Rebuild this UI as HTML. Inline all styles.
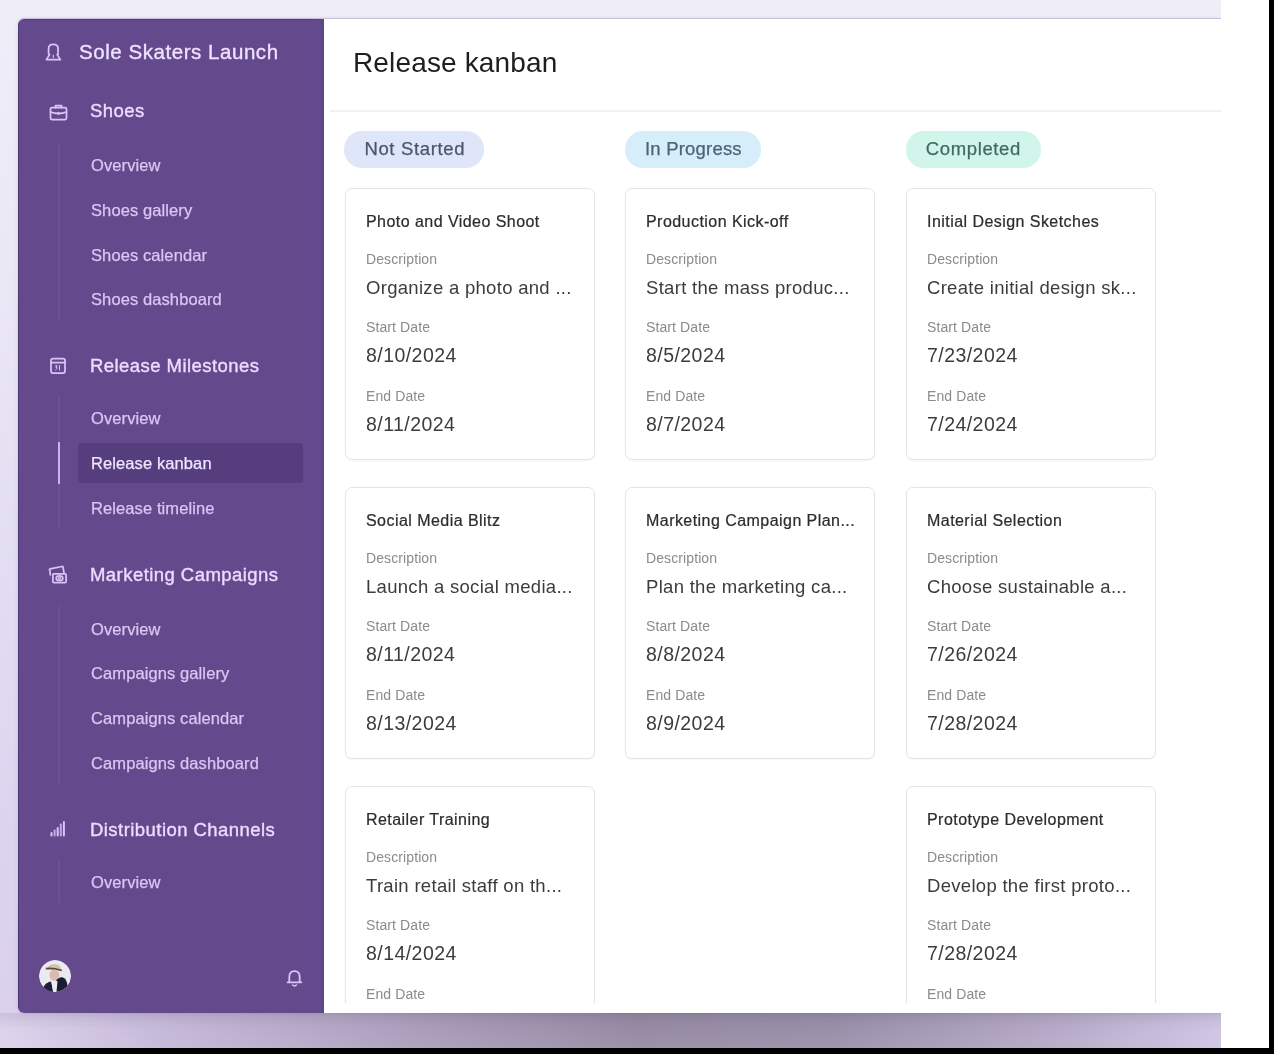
<!DOCTYPE html>
<html><head><meta charset="utf-8"><style>
html,body{margin:0;padding:0;}
body{width:1274px;height:1054px;overflow:hidden;position:relative;background:#fff;font-family:"Liberation Sans",sans-serif;}
.t{position:absolute;white-space:nowrap;}
#bg{position:absolute;left:0;top:0;width:1221px;height:1048px;background:linear-gradient(180deg,#f0eef9 0%,#ebe8f6 25%,#e2ddf2 55%,#dcd4ef 80%,#dad0ec 100%);}
#shadow{position:absolute;left:0;top:1013px;width:1221px;height:35px;
 background:linear-gradient(180deg,rgba(50,40,70,0.10) 0%,rgba(50,40,70,0) 45%,rgba(255,255,255,0.06) 100%),linear-gradient(90deg,#ddd3ec 0%,#c6b9d9 13%,#ad9fbd 33%,#978ba4 52%,#9a8fa9 68%,#b5a9c7 86%,#d0c5e3 100%);}
#whiteR{position:absolute;left:1221px;top:0;width:48px;height:1048px;background:#fff;}
#blackR{position:absolute;left:1269px;top:0;width:5px;height:1054px;background:#000;}
#blackB{position:absolute;left:0;top:1048px;width:1274px;height:6px;background:#000;}
#win{will-change:transform;box-shadow:0 -0.5px 1px rgba(70,50,110,0.22),0 0 5px rgba(70,50,110,0.10);position:absolute;left:18px;top:19px;width:1203px;height:994px;overflow:hidden;border-radius:6px 0 0 6px;background:#fff;}
#side{position:absolute;left:0;top:0;width:306px;height:994px;background:#644a8d;box-shadow:inset 1px 0 0 rgba(50,35,85,0.45),inset 0 1px 0 rgba(50,35,85,0.3);}
#sideedge{position:absolute;left:294px;top:0;width:12px;height:994px;background:linear-gradient(90deg,rgba(92,76,145,0) 0%,rgba(92,76,145,0.35) 70%,#5a4a8a 78%,#574787 100%);}
#main{position:absolute;left:306px;top:0;width:897px;height:994px;background:#fff;}
.gl{position:absolute;left:40px;width:1.5px;background:rgba(255,255,255,0.05);}
.gla{position:absolute;left:40px;width:1.5px;height:42px;background:#c9b5ea;}
.act{position:absolute;left:60px;width:225px;height:40px;border-radius:4px;background:#563d7e;}
.av{position:absolute;width:32px;height:32px;border-radius:50%;overflow:hidden;}
.pill{position:absolute;box-sizing:border-box;height:36.5px;line-height:36.5px;padding:0 0 0 20px;border-radius:18px;font-size:18.5px;white-space:nowrap;-webkit-text-stroke:0.25px currentColor;}
.clip{position:absolute;left:0;top:0;width:897px;height:984px;overflow:hidden;}
.card{position:absolute;width:250px;height:272px;box-sizing:border-box;border:1px solid #e4e4e8;border-radius:7px;background:#fff;box-shadow:0 1px 2px rgba(0,0,0,0.04);}
</style></head><body>
<div id="bg"></div>
<div id="shadow"></div>
<div id="win">
<div id="side"><div class="t" style="left:61px;top:23.00px;font-size:20.5px;line-height:20.5px;color:#efe2ff;letter-spacing:0.55px;font-weight:400;-webkit-text-stroke:0.35px currentColor;">Sole Skaters Launch</div><div class="t" style="left:72px;top:83.00px;font-size:18.5px;line-height:18.5px;color:#ecdcff;letter-spacing:0.45px;font-weight:400;-webkit-text-stroke:0.35px currentColor;">Shoes</div><div class="t" style="left:72px;top:338.00px;font-size:18.5px;line-height:18.5px;color:#ecdcff;letter-spacing:0.45px;font-weight:400;-webkit-text-stroke:0.35px currentColor;">Release Milestones</div><div class="t" style="left:72px;top:547.00px;font-size:18.5px;line-height:18.5px;color:#ecdcff;letter-spacing:0.45px;font-weight:400;-webkit-text-stroke:0.35px currentColor;">Marketing Campaigns</div><div class="t" style="left:72px;top:802.00px;font-size:18.5px;line-height:18.5px;color:#ecdcff;letter-spacing:0.45px;font-weight:400;-webkit-text-stroke:0.35px currentColor;">Distribution Channels</div><div class="gl" style="top:124.0px;height:177.6px"></div><div class="t" style="left:73px;top:138.00px;font-size:16.5px;line-height:16.5px;color:#dac7f3;letter-spacing:0.1px;font-weight:400;-webkit-text-stroke:0.25px currentColor;">Overview</div><div class="t" style="left:73px;top:183.00px;font-size:16.5px;line-height:16.5px;color:#dac7f3;letter-spacing:0.1px;font-weight:400;-webkit-text-stroke:0.25px currentColor;">Shoes gallery</div><div class="t" style="left:73px;top:228.00px;font-size:16.5px;line-height:16.5px;color:#dac7f3;letter-spacing:0.1px;font-weight:400;-webkit-text-stroke:0.25px currentColor;">Shoes calendar</div><div class="t" style="left:73px;top:272.00px;font-size:16.5px;line-height:16.5px;color:#dac7f3;letter-spacing:0.1px;font-weight:400;-webkit-text-stroke:0.25px currentColor;">Shoes dashboard</div><div class="gl" style="top:377.1px;height:133.0px"></div><div class="t" style="left:73px;top:391.00px;font-size:16.5px;line-height:16.5px;color:#dac7f3;letter-spacing:0.1px;font-weight:400;-webkit-text-stroke:0.25px currentColor;">Overview</div><div class="act" style="top:423.5px"></div><div class="gla" style="top:422.5px"></div><div class="t" style="left:73px;top:436.00px;font-size:16.5px;line-height:16.5px;color:#f0e6ff;letter-spacing:0.1px;font-weight:400;-webkit-text-stroke:0.25px currentColor;">Release kanban</div><div class="t" style="left:73px;top:481.00px;font-size:16.5px;line-height:16.5px;color:#dac7f3;letter-spacing:0.1px;font-weight:400;-webkit-text-stroke:0.25px currentColor;">Release timeline</div><div class="gl" style="top:587.4px;height:177.6px"></div><div class="t" style="left:73px;top:602.00px;font-size:16.5px;line-height:16.5px;color:#dac7f3;letter-spacing:0.1px;font-weight:400;-webkit-text-stroke:0.25px currentColor;">Overview</div><div class="t" style="left:73px;top:646.00px;font-size:16.5px;line-height:16.5px;color:#dac7f3;letter-spacing:0.1px;font-weight:400;-webkit-text-stroke:0.25px currentColor;">Campaigns gallery</div><div class="t" style="left:73px;top:691.00px;font-size:16.5px;line-height:16.5px;color:#dac7f3;letter-spacing:0.1px;font-weight:400;-webkit-text-stroke:0.25px currentColor;">Campaigns calendar</div><div class="t" style="left:73px;top:736.00px;font-size:16.5px;line-height:16.5px;color:#dac7f3;letter-spacing:0.1px;font-weight:400;-webkit-text-stroke:0.25px currentColor;">Campaigns dashboard</div><div class="gl" style="top:840.5px;height:43.8px"></div><div class="t" style="left:73px;top:855.00px;font-size:16.5px;line-height:16.5px;color:#dac7f3;letter-spacing:0.1px;font-weight:400;-webkit-text-stroke:0.25px currentColor;">Overview</div><svg style="position:absolute;left:26px;top:24px" width="18" height="20" viewBox="0 0 18 20" fill="none" stroke="#d8c4f7" stroke-width="1.75" stroke-linecap="round" stroke-linejoin="round"><path d="M4.6 11.2 V5.2 Q4.6 1.4 9.3 1.4 Q14 1.4 14 5.2 V11.2"/><path d="M5.6 11.6 L2.4 16.6 H16.4 L13.2 11.6"/><path d="M9.3 12 V14.5" stroke-width="1.1"/></svg><svg style="position:absolute;left:31px;top:84px" width="19" height="18" viewBox="0 0 19 18" fill="none" stroke="#d8c4f7" stroke-width="1.75" stroke-linecap="round" stroke-linejoin="round"><rect x="1.5" y="4.5" width="16" height="12" rx="1.5"/><path d="M6.5 4.5 V2.5 H12.5 V4.5"/><path d="M1.5 9 Q9.5 12 17.5 9"/><path d="M9.5 9.5 V11"/></svg><svg style="position:absolute;left:31px;top:337px" width="18" height="19" viewBox="0 0 18 19" fill="none" stroke="#d8c4f7" stroke-width="1.75" stroke-linecap="round" stroke-linejoin="round"><rect x="2" y="2.5" width="14" height="14.5" rx="2"/><path d="M2 6.5 H16"/><path d="M6.5 10 L8 9.5 L7 11.5 L8.5 12 L6.5 14" stroke-width="1"/><path d="M10.5 9.5 V14" stroke-width="1"/></svg><svg style="position:absolute;left:30px;top:545px" width="20" height="20" viewBox="0 0 20 20" fill="none" stroke="#d8c4f7" stroke-width="1.75" stroke-linecap="round" stroke-linejoin="round"><path d="M2.4 10.8 L1.6 5.6 Q1.5 4.9 2.2 4.8 L14 2.5 Q14.8 2.4 15 3.1 L16 8.8"/><rect x="4.9" y="9.9" width="13.2" height="8.6" rx="1"/><ellipse cx="11.5" cy="14.2" rx="3.3" ry="2.3"/><circle cx="11.5" cy="14.2" r="0.6"/></svg><svg style="position:absolute;left:32px;top:801px" width="16" height="17" viewBox="0 0 16 17" fill="#d8c4f7"><rect x="0.5" y="12" width="2" height="4.6" rx="1"/><rect x="3.6" y="9.6" width="2" height="7" rx="1" opacity="0.8"/><rect x="6.7" y="7" width="2" height="9.6" rx="1"/><rect x="9.8" y="3.6" width="2" height="13" rx="1" opacity="0.8"/><rect x="12.9" y="1" width="2" height="15.6" rx="1"/></svg><svg style="position:absolute;left:267px;top:949px" width="19" height="20" viewBox="0 0 19 20" fill="none" stroke="#d8c4f7" stroke-width="1.75" stroke-linecap="round" stroke-linejoin="round"><path d="M4.3 14.2 V9 Q4.3 3.2 9.5 3.2 Q14.7 3.2 14.7 9 V14.2" stroke-width="1.8"/><path d="M2.6 14.4 H16.4" stroke-width="1.8"/><path d="M7.6 17 Q9.5 18.8 11.4 17" stroke-width="1.6"/></svg><div class="av" style="left:20.7px;top:940.6px"><svg width="32" height="32" viewBox="0 0 32 32" style="filter:blur(0.35px)"><circle cx="16" cy="16" r="16" fill="#ebe9f3"/><path d="M8 9 Q9 4.5 15 4 Q21 4 22 8.5 L22.5 10 L8 9.8 Z" fill="#d2c4ac"/><path d="M6.8 8.6 Q14 7.6 22.8 10.6" stroke="#5e4c3a" stroke-width="1.6" fill="none"/><ellipse cx="15.5" cy="15.2" rx="5" ry="5.6" fill="#d9bcad"/><path d="M17 21 Q20 16.5 24 17.5 Q28 19 28.5 26 Q24 31 17 32 Z" fill="#1c1b34"/><path d="M4.5 27 Q7 22 12.5 21.5 L14 32 Q8 31.5 4.5 27 Z" fill="#1f1e38"/><path d="M12 21.5 L14.5 32 L17.5 32 L18.5 21 Z" fill="#efebf2"/></svg></div><div id="sideedge"></div></div>
<div id="main"><div class="t" style="left:29px;top:30.00px;font-size:28px;line-height:28px;color:#1e1e22;letter-spacing:0.15px;font-weight:400;">Release kanban</div><div style="position:absolute;left:6px;top:91px;width:900px;height:2px;background:#f1f1f3"></div><div class="pill" style="left:20.4px;top:112.3px;width:139.4px;background:#e0e6fa;color:#4a5571;letter-spacing:0.65px">Not Started</div><div class="pill" style="left:301.0px;top:112.3px;width:135.7px;background:#d6eef9;color:#48657a;letter-spacing:0.2px">In Progress</div><div class="pill" style="left:581.7px;top:112.3px;width:135.0px;background:#d2f5eb;color:#3f6b5e;letter-spacing:0.65px">Completed</div><div class="clip"><div class="card" style="left:21px;top:169px"><div class="t" style="left:20px;top:25.00px;font-size:16px;line-height:16px;color:#2c2c30;letter-spacing:0.45px;font-weight:400;-webkit-text-stroke:0.22px #2c2c30;">Photo and Video Shoot</div><div class="t" style="left:20px;top:63.00px;font-size:14px;line-height:14px;color:#8a8a90;letter-spacing:0.1px;font-weight:400;">Description</div><div class="t" style="left:20px;top:90.00px;font-size:18.5px;line-height:18.5px;color:#3c3c40;letter-spacing:0.3px;font-weight:400;">Organize a photo and ...</div><div class="t" style="left:20px;top:131.00px;font-size:14px;line-height:14px;color:#8a8a90;letter-spacing:0.1px;font-weight:400;">Start Date</div><div class="t" style="left:20px;top:157.00px;font-size:19.5px;line-height:19.5px;color:#3c3c40;letter-spacing:0.45px;font-weight:400;">8/10/2024</div><div class="t" style="left:20px;top:200.00px;font-size:14px;line-height:14px;color:#8a8a90;letter-spacing:0.1px;font-weight:400;">End Date</div><div class="t" style="left:20px;top:226.00px;font-size:19.5px;line-height:19.5px;color:#3c3c40;letter-spacing:0.45px;font-weight:400;">8/11/2024</div></div><div class="card" style="left:301px;top:169px"><div class="t" style="left:20px;top:25.00px;font-size:16px;line-height:16px;color:#2c2c30;letter-spacing:0.45px;font-weight:400;-webkit-text-stroke:0.22px #2c2c30;">Production Kick-off</div><div class="t" style="left:20px;top:63.00px;font-size:14px;line-height:14px;color:#8a8a90;letter-spacing:0.1px;font-weight:400;">Description</div><div class="t" style="left:20px;top:90.00px;font-size:18.5px;line-height:18.5px;color:#3c3c40;letter-spacing:0.3px;font-weight:400;">Start the mass produc...</div><div class="t" style="left:20px;top:131.00px;font-size:14px;line-height:14px;color:#8a8a90;letter-spacing:0.1px;font-weight:400;">Start Date</div><div class="t" style="left:20px;top:157.00px;font-size:19.5px;line-height:19.5px;color:#3c3c40;letter-spacing:0.45px;font-weight:400;">8/5/2024</div><div class="t" style="left:20px;top:200.00px;font-size:14px;line-height:14px;color:#8a8a90;letter-spacing:0.1px;font-weight:400;">End Date</div><div class="t" style="left:20px;top:226.00px;font-size:19.5px;line-height:19.5px;color:#3c3c40;letter-spacing:0.45px;font-weight:400;">8/7/2024</div></div><div class="card" style="left:582px;top:169px"><div class="t" style="left:20px;top:25.00px;font-size:16px;line-height:16px;color:#2c2c30;letter-spacing:0.45px;font-weight:400;-webkit-text-stroke:0.22px #2c2c30;">Initial Design Sketches</div><div class="t" style="left:20px;top:63.00px;font-size:14px;line-height:14px;color:#8a8a90;letter-spacing:0.1px;font-weight:400;">Description</div><div class="t" style="left:20px;top:90.00px;font-size:18.5px;line-height:18.5px;color:#3c3c40;letter-spacing:0.3px;font-weight:400;">Create initial design sk...</div><div class="t" style="left:20px;top:131.00px;font-size:14px;line-height:14px;color:#8a8a90;letter-spacing:0.1px;font-weight:400;">Start Date</div><div class="t" style="left:20px;top:157.00px;font-size:19.5px;line-height:19.5px;color:#3c3c40;letter-spacing:0.45px;font-weight:400;">7/23/2024</div><div class="t" style="left:20px;top:200.00px;font-size:14px;line-height:14px;color:#8a8a90;letter-spacing:0.1px;font-weight:400;">End Date</div><div class="t" style="left:20px;top:226.00px;font-size:19.5px;line-height:19.5px;color:#3c3c40;letter-spacing:0.45px;font-weight:400;">7/24/2024</div></div><div class="card" style="left:21px;top:468px"><div class="t" style="left:20px;top:25.00px;font-size:16px;line-height:16px;color:#2c2c30;letter-spacing:0.45px;font-weight:400;-webkit-text-stroke:0.22px #2c2c30;">Social Media Blitz</div><div class="t" style="left:20px;top:63.00px;font-size:14px;line-height:14px;color:#8a8a90;letter-spacing:0.1px;font-weight:400;">Description</div><div class="t" style="left:20px;top:90.00px;font-size:18.5px;line-height:18.5px;color:#3c3c40;letter-spacing:0.3px;font-weight:400;">Launch a social media...</div><div class="t" style="left:20px;top:131.00px;font-size:14px;line-height:14px;color:#8a8a90;letter-spacing:0.1px;font-weight:400;">Start Date</div><div class="t" style="left:20px;top:157.00px;font-size:19.5px;line-height:19.5px;color:#3c3c40;letter-spacing:0.45px;font-weight:400;">8/11/2024</div><div class="t" style="left:20px;top:200.00px;font-size:14px;line-height:14px;color:#8a8a90;letter-spacing:0.1px;font-weight:400;">End Date</div><div class="t" style="left:20px;top:226.00px;font-size:19.5px;line-height:19.5px;color:#3c3c40;letter-spacing:0.45px;font-weight:400;">8/13/2024</div></div><div class="card" style="left:301px;top:468px"><div class="t" style="left:20px;top:25.00px;font-size:16px;line-height:16px;color:#2c2c30;letter-spacing:0.45px;font-weight:400;-webkit-text-stroke:0.22px #2c2c30;">Marketing Campaign Plan...</div><div class="t" style="left:20px;top:63.00px;font-size:14px;line-height:14px;color:#8a8a90;letter-spacing:0.1px;font-weight:400;">Description</div><div class="t" style="left:20px;top:90.00px;font-size:18.5px;line-height:18.5px;color:#3c3c40;letter-spacing:0.3px;font-weight:400;">Plan the marketing ca...</div><div class="t" style="left:20px;top:131.00px;font-size:14px;line-height:14px;color:#8a8a90;letter-spacing:0.1px;font-weight:400;">Start Date</div><div class="t" style="left:20px;top:157.00px;font-size:19.5px;line-height:19.5px;color:#3c3c40;letter-spacing:0.45px;font-weight:400;">8/8/2024</div><div class="t" style="left:20px;top:200.00px;font-size:14px;line-height:14px;color:#8a8a90;letter-spacing:0.1px;font-weight:400;">End Date</div><div class="t" style="left:20px;top:226.00px;font-size:19.5px;line-height:19.5px;color:#3c3c40;letter-spacing:0.45px;font-weight:400;">8/9/2024</div></div><div class="card" style="left:582px;top:468px"><div class="t" style="left:20px;top:25.00px;font-size:16px;line-height:16px;color:#2c2c30;letter-spacing:0.45px;font-weight:400;-webkit-text-stroke:0.22px #2c2c30;">Material Selection</div><div class="t" style="left:20px;top:63.00px;font-size:14px;line-height:14px;color:#8a8a90;letter-spacing:0.1px;font-weight:400;">Description</div><div class="t" style="left:20px;top:90.00px;font-size:18.5px;line-height:18.5px;color:#3c3c40;letter-spacing:0.3px;font-weight:400;">Choose sustainable a...</div><div class="t" style="left:20px;top:131.00px;font-size:14px;line-height:14px;color:#8a8a90;letter-spacing:0.1px;font-weight:400;">Start Date</div><div class="t" style="left:20px;top:157.00px;font-size:19.5px;line-height:19.5px;color:#3c3c40;letter-spacing:0.45px;font-weight:400;">7/26/2024</div><div class="t" style="left:20px;top:200.00px;font-size:14px;line-height:14px;color:#8a8a90;letter-spacing:0.1px;font-weight:400;">End Date</div><div class="t" style="left:20px;top:226.00px;font-size:19.5px;line-height:19.5px;color:#3c3c40;letter-spacing:0.45px;font-weight:400;">7/28/2024</div></div><div class="card" style="left:21px;top:767px"><div class="t" style="left:20px;top:25.00px;font-size:16px;line-height:16px;color:#2c2c30;letter-spacing:0.45px;font-weight:400;-webkit-text-stroke:0.22px #2c2c30;">Retailer Training</div><div class="t" style="left:20px;top:63.00px;font-size:14px;line-height:14px;color:#8a8a90;letter-spacing:0.1px;font-weight:400;">Description</div><div class="t" style="left:20px;top:90.00px;font-size:18.5px;line-height:18.5px;color:#3c3c40;letter-spacing:0.3px;font-weight:400;">Train retail staff on th...</div><div class="t" style="left:20px;top:131.00px;font-size:14px;line-height:14px;color:#8a8a90;letter-spacing:0.1px;font-weight:400;">Start Date</div><div class="t" style="left:20px;top:157.00px;font-size:19.5px;line-height:19.5px;color:#3c3c40;letter-spacing:0.45px;font-weight:400;">8/14/2024</div><div class="t" style="left:20px;top:200.00px;font-size:14px;line-height:14px;color:#8a8a90;letter-spacing:0.1px;font-weight:400;">End Date</div><div class="t" style="left:20px;top:226.00px;font-size:19.5px;line-height:19.5px;color:#3c3c40;letter-spacing:0.45px;font-weight:400;">8/16/2024</div></div><div class="card" style="left:582px;top:767px"><div class="t" style="left:20px;top:25.00px;font-size:16px;line-height:16px;color:#2c2c30;letter-spacing:0.45px;font-weight:400;-webkit-text-stroke:0.22px #2c2c30;">Prototype Development</div><div class="t" style="left:20px;top:63.00px;font-size:14px;line-height:14px;color:#8a8a90;letter-spacing:0.1px;font-weight:400;">Description</div><div class="t" style="left:20px;top:90.00px;font-size:18.5px;line-height:18.5px;color:#3c3c40;letter-spacing:0.3px;font-weight:400;">Develop the first proto...</div><div class="t" style="left:20px;top:131.00px;font-size:14px;line-height:14px;color:#8a8a90;letter-spacing:0.1px;font-weight:400;">Start Date</div><div class="t" style="left:20px;top:157.00px;font-size:19.5px;line-height:19.5px;color:#3c3c40;letter-spacing:0.45px;font-weight:400;">7/28/2024</div><div class="t" style="left:20px;top:200.00px;font-size:14px;line-height:14px;color:#8a8a90;letter-spacing:0.1px;font-weight:400;">End Date</div><div class="t" style="left:20px;top:226.00px;font-size:19.5px;line-height:19.5px;color:#3c3c40;letter-spacing:0.45px;font-weight:400;">7/30/2024</div></div></div></div>
</div>
<div id="whiteR"></div><div id="blackR"></div>
<div id="blackB"></div>
</body></html>
